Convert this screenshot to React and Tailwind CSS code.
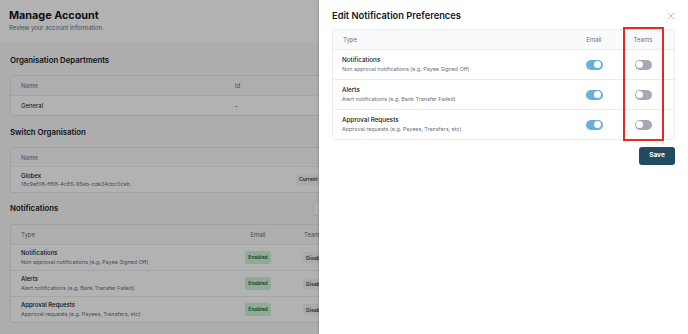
import { X } from "lucide-react";

const prefs = [
  { title: "Notifications", sub: "Non approval notifications (e.g. Payee Signed Off)" },
  { title: "Alerts", sub: "Alert notifications (e.g. Bank Transfer Failed)" },
  { title: "Approval Requests", sub: "Approval requests (e.g. Payees, Transfers, etc)" },
];

function Toggle({ on }) {
  return (
    <span
      className={`inline-flex h-[10px] w-[17px] items-center rounded-full px-[1.5px] ${
        on ? "justify-end bg-[#67b0d8]" : "justify-start bg-[#a9a7b6]"
      }`}
    >
      <span className="h-[7px] w-[7px] rounded-full bg-white" />
    </span>
  );
}

function SectionTitle({ children, right }) {
  return (
    <div className="flex h-[15px] items-center justify-between">
      <h2 className="text-[7.8px] font-semibold text-[#101828]">{children}</h2>
      {right}
    </div>
  );
}

function BackgroundPage() {
  return (
    <div className="h-full w-full bg-[#f8f8f9]">
      <header className="h-[43px] bg-white px-[9px] pt-[9px]">
        <h1 className="text-[10.8px] font-bold leading-[14px] text-[#101828]">Manage Account</h1>
        <p className="text-[6px] leading-[10px] text-[#667085]">Review your account information.</p>
      </header>

      <div className="flex w-[370px] flex-col pl-[10px] pt-[10px]">
        <SectionTitle>Organisation Departments</SectionTitle>
        <div className="mt-[7px] overflow-hidden rounded-[3px] border border-[#e4e7ec] bg-white text-[6px]">
          <div className="flex h-[19px] items-center bg-[#f9fafb] text-[#667085]">
            <span className="w-[224px] pl-[10px]">Name</span>
            <span>Id</span>
          </div>
          <div className="flex h-[20px] items-center border-t border-[#eaecf0] text-[#101828]">
            <span className="w-[224px] pl-[10px]">General</span>
            <span>-</span>
          </div>
        </div>

        <div className="mt-[9px]">
          <SectionTitle>Switch Organisation</SectionTitle>
        </div>
        <div className="mt-[7px] overflow-hidden rounded-[3px] border border-[#e4e7ec] bg-white text-[6px]">
          <div className="flex h-[18px] items-center bg-[#f9fafb] pl-[10px] text-[#667085]">Name</div>
          <div className="flex h-[26px] items-center border-t border-[#eaecf0] pl-[10px]">
            <div className="w-[275px]">
              <div className="font-medium leading-[9px] text-[#101828]">Globex</div>
              <div className="text-[5.4px] leading-[9px] text-[#667085]">18c9ef08-ff68-4c85-95eb-cde24cbc0ceb</div>
            </div>
            <span className="rounded-[2px] bg-[#f2f4f7] px-[3px] py-[2px] text-[5px] font-semibold text-[#344054]">
              Current
            </span>
          </div>
        </div>

        <div className="mt-[8px]">
          <SectionTitle
            right={
              <button className="h-[15px] w-[57px] rounded-[3px] border border-[#e4e7ec] bg-white text-[6px] font-semibold text-[#344054]">
                Edit
              </button>
            }
          >
            Notifications
          </SectionTitle>
        </div>
        <div className="mt-[8px] overflow-hidden rounded-[3px] border border-[#e4e7ec] bg-white text-[6px]">
          <div className="flex h-[19px] items-center bg-[#f9fafb] text-[#667085]">
            <span className="w-[224px] pl-[10px]">Type</span>
            <span className="w-[46px] text-center">Email</span>
            <span className="ml-[12px] w-[60px] pl-[11px]">Teams</span>
          </div>
          {prefs.map((p) => (
            <div key={p.title} className="flex h-[26px] items-center border-t border-[#eaecf0]">
              <div className="w-[224px] pl-[10px]">
                <div className="font-medium leading-[10px] text-[#101828]">{p.title}</div>
                <div className="text-[5.4px] leading-[9px] text-[#667085]">{p.sub}</div>
              </div>
              <div className="flex w-[46px] justify-center">
                <span className="rounded-[2px] bg-[#ccf5da] px-[3.5px] py-[2.5px] text-[5px] font-semibold text-[#1d5b36]">
                  Enabled
                </span>
              </div>
              <div className="ml-[12px] w-[60px] pl-[10px]">
                <span className="rounded-[2px] bg-[#f2f4f7] px-[3px] py-[2.5px] text-[5px] font-semibold text-[#344054]">
                  Disabled
                </span>
              </div>
            </div>
          ))}
        </div>
      </div>
    </div>
  );
}

export default function App() {
  return (
    <div className="relative h-[334px] w-[688px] overflow-hidden font-['Inter',sans-serif]">
      <BackgroundPage />
      <div className="absolute inset-0 bg-black/30" />

      <aside className="absolute right-0 top-0 flex h-full w-[369px] flex-col bg-white px-[13px] pt-[9px] shadow-[-1px_0_2px_rgba(0,0,0,0.15)]">
        <div className="flex h-[14px] items-center justify-between">
          <h2 className="text-[9.3px] font-semibold text-[#101828]">Edit Notification Preferences</h2>
          <X size={12} strokeWidth={1.3} className="mr-[-2px] text-[#9aa1ab]" />
        </div>

        <div className="relative mt-[6px]">
          <div className="overflow-hidden rounded-[3px] border border-[#eaecf0] bg-white">
            <div className="flex h-[19px] items-center bg-[#f9fafb] text-[6px] text-[#667085]">
              <span className="flex-1 pl-[10px]">Type</span>
              <span className="w-[40px] text-center">Email</span>
              <span className="ml-[9px] w-[40px] text-center">Teams</span>
              <span className="w-[11px]" />
            </div>
            {prefs.map((p) => (
              <div key={p.title} className="flex h-[30px] items-center border-t border-[#eaecf0]">
                <div className="flex-1 pl-[9px]">
                  <div className="text-[6.3px] font-medium leading-[9px] text-[#101828]">{p.title}</div>
                  <div className="text-[5.4px] leading-[9px] text-[#667085]">{p.sub}</div>
                </div>
                <div className="flex w-[40px] justify-center">
                  <Toggle on />
                </div>
                <div className="ml-[9px] flex w-[40px] justify-center">
                  <Toggle on={false} />
                </div>
                <span className="w-[11px]" />
              </div>
            ))}
          </div>
          <div className="pointer-events-none absolute bottom-[-1px] right-[11px] top-[-2px] w-[41px] border-2 border-[#e8291f]" />
        </div>

        <div className="mt-[7px] flex justify-end">
          <button className="h-[18px] w-[36px] rounded-[3px] bg-[#214c60] text-[6.5px] font-bold text-white">
            Save
          </button>
        </div>
      </aside>
    </div>
  );
}
